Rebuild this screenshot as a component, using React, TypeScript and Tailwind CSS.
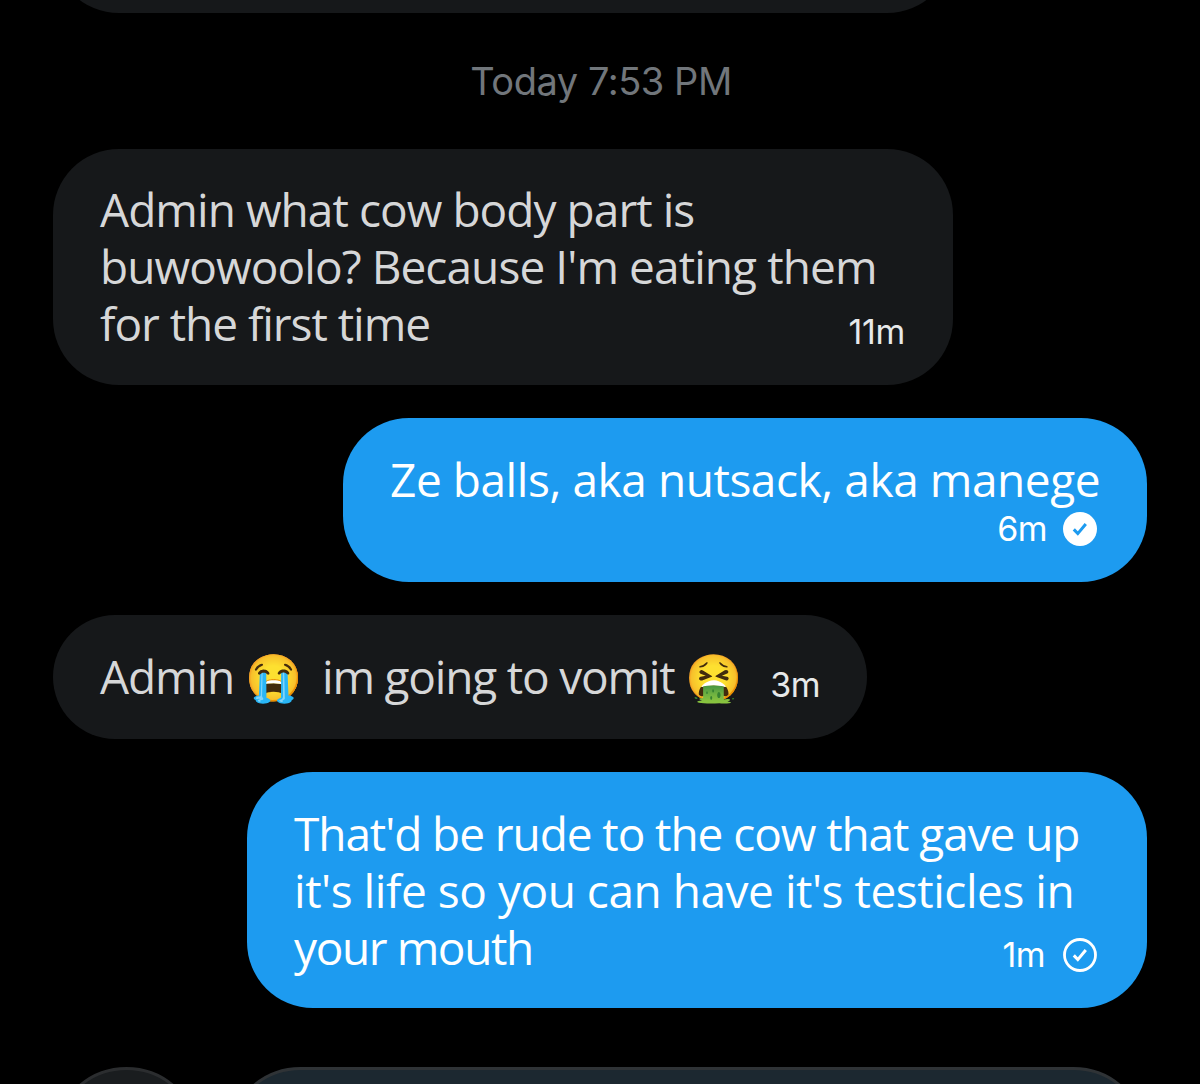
type Line = { text: string; tracking: string }

function Bubble({ children, className }: { children: React.ReactNode; className: string }) {
  return <div className={`flex shrink-0 rounded-[66px] ${className}`}>{children}</div>
}

function Lines({ lines }: { lines: Line[] }) {
  return (
    <p className="whitespace-nowrap">
      {lines.map((line) => (
        <span key={line.text} className={`block ${line.tracking}`}>
          {line.text}
        </span>
      ))}
    </p>
  )
}

function SeenIcon() {
  return (
    <svg viewBox="0 0 34 34" className="size-[34px] shrink-0">
      <circle cx="17" cy="17" r="17" fill="#fff" />
      <path d="M10.8 17.4l4 4.2 8-9.6" fill="none" stroke="#1d9bf0" strokeWidth="3" />
    </svg>
  )
}

function SentIcon() {
  return (
    <svg viewBox="0 0 34 34" className="size-[34px] shrink-0">
      <circle cx="17" cy="17" r="15.5" fill="none" stroke="#fff" strokeWidth="2.8" />
      <path d="M10.8 17.4l4 4.2 8-9.6" fill="none" stroke="#fff" strokeWidth="3" />
    </svg>
  )
}

export default function App() {
  return (
    <div className="flex h-[1084px] w-[1200px] flex-col overflow-hidden bg-black px-[53px] font-['Open_Sans','Noto_Color_Emoji',sans-serif] text-[46px] leading-[57px] font-[430] text-[#d6d7d8]">
      <div className="h-[13px] w-[900px] shrink-0 overflow-hidden">
        <div className="-mt-[187px] h-[200px] rounded-[66px] bg-[#16181a]" />
      </div>

      <div className="flex h-[136px] shrink-0 items-center justify-center pl-[2px] font-['Inter',sans-serif] text-[38px] font-normal tracking-[-0.45px] text-[#71767b]">
        Today 7:53 PM
      </div>

      <Bubble className="h-[236px] w-[900px] justify-between bg-[#16181a] pt-8 pr-12 pl-[47px]">
        <Lines
          lines={[
            { text: "Admin what cow body part is", tracking: "tracking-[-0.95px]" },
            { text: "buwowoolo? Because I'm eating them", tracking: "tracking-[-0.92px]" },
            { text: "for the first time", tracking: "tracking-[-1.05px]" },
          ]}
        />
        <span className="-ml-20 mt-[131px] h-10 font-['Inter',sans-serif] text-[34px] leading-10 font-normal tracking-[-0.3px] text-[#e7e9ea]">
          11m
        </span>
      </Bubble>

      <Bubble className="mt-[33px] h-[164px] w-[804px] flex-col self-end bg-[#1d9bf0] pt-[33px] pr-[50px] pl-[47px] text-white">
        <Lines lines={[{ text: "Ze balls, aka nutsack, aka manege", tracking: "tracking-[-0.44px]" }]} />
        <div className="mt-px flex h-10 items-center justify-end gap-4 font-['Inter',sans-serif] text-[34px] leading-10 font-normal tracking-[-0.5px]">
          6m
          <SeenIcon />
        </div>
      </Bubble>

      <Bubble className="mt-[33px] h-[124px] w-[814px] justify-between bg-[#16181a] pt-[33px] pr-[47px] pl-[47px] whitespace-nowrap">
        <div className="flex">
          <span className="w-[145px] tracking-[-1.1px]">Admin</span>
          <span className="w-[77px] text-[46px]">😭</span>
          <span className="w-[363px] tracking-[-1.2px]">im going to vomit</span>
          <span className="text-[46px]">🤮</span>
        </div>
        <span className="mt-[17px] font-['Inter',sans-serif] text-[34px] leading-10 font-normal tracking-[-0.5px] text-[#e7e9ea]">
          3m
        </span>
      </Bubble>

      <Bubble className="mt-[33px] h-[236px] w-[900px] justify-between self-end bg-[#1d9bf0] pt-[33px] pr-[50px] pl-[47px] text-white">
        <Lines
          lines={[
            { text: "That'd be rude to the cow that gave up", tracking: "tracking-[-1.08px]" },
            { text: "it's life so you can have it's testicles in", tracking: "tracking-[-0.47px]" },
            { text: "your mouth", tracking: "tracking-[-1.4px]" },
          ]}
        />
        <div className="mt-[130px] -ml-32 flex h-10 items-center gap-[18px] font-['Inter',sans-serif] text-[34px] leading-10 font-normal tracking-[-0.5px]">
          1m
          <SentIcon />
        </div>
      </Bubble>

      <div className="mt-[59px] flex shrink-0 gap-[27px]">
        <div className="size-[147px] rounded-full border-[3px] border-[#2b2d2f] bg-[#1a1d1f]" />
        <div className="h-[147px] flex-1 rounded-full border-[3px] border-[#2f3336] bg-[#1c2830]" />
      </div>
    </div>
  )
}
